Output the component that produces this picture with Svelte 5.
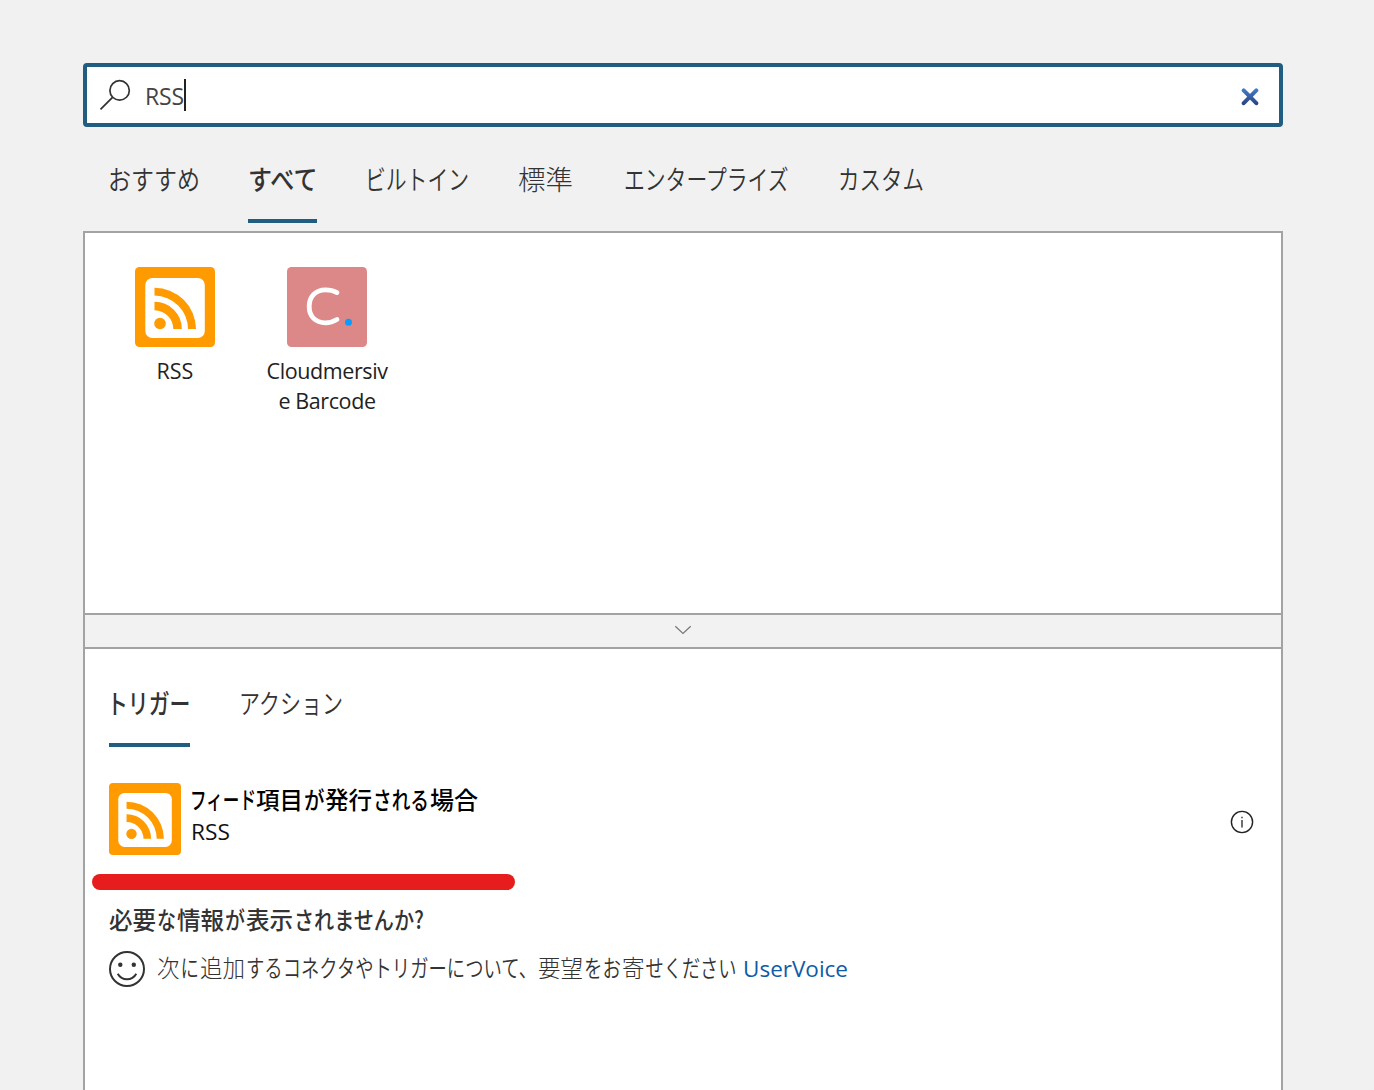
<script lang="ts">
  // A run is [text, left edge, width]; kana runs are set narrower than kanji.
  type Run = [string, number, number];
  type Line = { w: number; h: number; base: number; size: number; runs: Run[] };

  const tabs: { active?: boolean; line: Line }[] = [
    { line: { w: 91, h: 40, base: 30, size: 27, runs: [['おすすめ', 0, 92]] } },
    { active: true, line: { w: 69, h: 40, base: 30, size: 27, runs: [['すべて', 0, 69.5]] } },
    { line: { w: 103, h: 40, base: 30, size: 27, runs: [['ビルトイン', -1, 104]] } },
    { line: { w: 57, h: 40, base: 30, size: 27, runs: [['標準', 0, 55]] } },
    { line: { w: 164, h: 40, base: 30, size: 27, runs: [['エンタープライズ', 0, 164.5]] } },
    { line: { w: 86, h: 40, base: 30, size: 27, runs: [['カスタム', 1, 86]] } },
  ];
  const kinds: { active?: boolean; line: Line }[] = [
    { active: true, line: { w: 81, h: 40, base: 30, size: 27, runs: [['トリガー', -2, 83.5]] } },
    { line: { w: 104, h: 40, base: 30, size: 27, runs: [['アクション', 0, 104]] } },
  ];
  const title: Line = {
    w: 290, h: 32, base: 26, size: 24,
    runs: [['フィード', -1, 66], ['項目', 65, 47], ['が', 113, 20.5], ['発行', 134, 47], ['される', 182, 56], ['場合', 239, 48]],
  };
  const question: Line = {
    w: 320, h: 34, base: 25, size: 24,
    runs: [['必要', 0, 47], ['な', 48, 19], ['情報', 68, 47], ['が', 116, 20], ['表示', 137, 47], ['されませんか?', 185, 130]],
  };
  const hint: Line = {
    w: 586, h: 34, base: 25, size: 24,
    runs: [['次', 0, 22.5], ['に', 23.5, 18.5], ['追加', 43, 45], ['するコネクタやトリガーについて、', 89, 291], ['要望', 381, 45], ['をお', 427, 37], ['寄', 465, 22.5], ['せください', 488.5, 91]],
  };

  const isKanji = (text: string) => /^[\u4e00-\u9fff]+$/.test(text);

  let query = $state('RSS');
</script>

{#snippet textLine(line: Line)}
  <svg class="line" width={line.w} height={line.h} font-size={line.size}>
    <text y={line.base}>
      {#each line.runs as [text, x, width]}<tspan class:kanji={isKanji(text)} {x} textLength={width} lengthAdjust="spacingAndGlyphs">{text}</tspan>{/each}
    </text>
  </svg>
{/snippet}

{#snippet rssLogo(size: number)}
  <svg class="logo" width={size} height={size} viewBox="0 0 80 80">
    <rect width="80" height="80" rx="4.5" fill="#ff9a00" />
    <rect x="10.3" y="11" width="59.5" height="60" rx="7" fill="#fff" />
    <circle cx="25" cy="56.5" r="5.8" fill="#ff9a00" />
    <path d="M19.5 34.8A27 27 0 0 1 46.8 62H38.3A19 19 0 0 0 19.5 43.2ZM19.5 20.8A41.5 41.5 0 0 1 61 62H53A33.5 33.5 0 0 0 19.5 28.6Z" fill="#ff9a00" />
  </svg>
{/snippet}

<main>
  <div class="search">
    <svg width="32" height="32" viewBox="0 0 32 32" fill="none" stroke="#333" stroke-width="1.7">
      <circle cx="20.6" cy="11.4" r="9.7" />
      <path d="M13.5 18.3 1.5 30.3" />
    </svg>
    <span class="query">{query}</span><i class="caret"></i>
    <svg class="clear" width="18" height="18" viewBox="0 0 18 18">
      <defs>
        <linearGradient id="clear-fill" x1="0" y1="0" x2="0" y2="18" gradientUnits="userSpaceOnUse">
          <stop offset="0" stop-color="#4780cc" />
          <stop offset="1" stop-color="#253f78" />
        </linearGradient>
      </defs>
      <path d="M2.7 2.4 15.3 15.2M15.3 2.4 2.7 15.2" fill="none" stroke="url(#clear-fill)" stroke-width="4" stroke-linecap="round" />
    </svg>
  </div>

  <nav class="tabs">
    {#each tabs as tab}
      <div class="tab" class:active={tab.active}>{@render textLine(tab.line)}</div>
    {/each}
  </nav>

  <section class="panel">
    <div class="connectors">
      <div class="connector">
        {@render rssLogo(80)}
        <span>RSS</span>
      </div>
      <div class="connector">
        <svg class="logo" width="80" height="80" viewBox="0 0 80 80">
          <rect width="80" height="80" rx="4.5" fill="#dc8888" />
          <path d="M50 25.6C46.5 23.6 43 22.8 38.5 22.8C28 22.8 22.2 30 22.2 39.5C22.2 49.5 28.5 55.8 38.5 55.8C43 55.8 46.5 54.6 50 52.5" fill="none" stroke="#fff" stroke-width="4.8" stroke-linecap="round" />
          <circle cx="61.5" cy="55.3" r="3.5" fill="#0a9bff" />
        </svg>
        <span class="tight">Cloudmersiv<br />e Barcode</span>
      </div>
    </div>

    <div class="divider">
      <svg width="18" height="10" viewBox="0 0 18 10" fill="none" stroke="#777" stroke-width="1.2">
        <path d="M1.3 1.3 9 8.5 16.7 1.3" />
      </svg>
    </div>

    <div class="results">
      <nav class="kinds">
        {#each kinds as kind}
          <div class="tab" class:active={kind.active}>{@render textLine(kind.line)}</div>
        {/each}
      </nav>

      <div class="item">
        {@render rssLogo(72)}
        <div class="item-text">
          <div class="item-title">{@render textLine(title)}</div>
          <div class="item-sub">RSS</div>
        </div>
        <svg class="info" width="24" height="24" viewBox="0 0 24 24">
          <circle cx="12" cy="12" r="10.6" fill="none" stroke="#222" stroke-width="1.4" />
          <path d="M12 10V17.5M12 6.7V8.3" stroke="#222" stroke-width="1.3" />
        </svg>
      </div>

      <div class="marker"></div>

      <div class="question">{@render textLine(question)}</div>
      <div class="hint">
        <svg width="36" height="36" viewBox="0 0 36 36" fill="none" stroke="#333" stroke-width="2">
          <circle cx="18" cy="18" r="17" />
          <circle cx="11.3" cy="13.7" r="2.2" fill="#333" stroke="none" />
          <circle cx="24.8" cy="13.7" r="2.2" fill="#333" stroke="none" />
          <path d="M8.7 22.7C13 30.2 23 30.2 27.3 22.7" />
        </svg>
        {@render textLine(hint)}
        <a href="#uservoice">UserVoice</a>
      </div>
    </div>
  </section>
</main>

<style>
  :global(body) {
    margin: 0;
    background: #f1f1f1;
  }
  main {
    box-sizing: border-box;
    height: 1090px;
    padding: 63px 91px 0 83px;
    overflow: hidden;
    display: flex;
    flex-direction: column;
    color: #333;
    font-family: 'Open Sans', 'Noto Sans CJK JP', sans-serif;
  }
  svg {
    display: block;
    flex: none;
  }
  .line {
    overflow: visible;
    fill: currentColor;
    font-family: 'Noto Sans CJK JP', sans-serif;
    font-weight: 350;
  }
  .tab .kanji,
  .hint .kanji {
    font-weight: 300;
  }
  .search {
    box-sizing: border-box;
    height: 64px;
    flex: none;
    display: flex;
    align-items: center;
    padding: 0 20px 0 12px;
    background: #fff;
    border: 4px solid #215d80;
    border-radius: 4px;
  }
  .query {
    width: 39px;
    margin-left: 14px;
    color: #444;
    font-size: 23px;
    line-height: 32px;
    letter-spacing: -0.2px;
    padding-top: 2px;
  }
  .caret {
    width: 2px;
    height: 32px;
    background: #222;
  }
  .clear {
    margin-left: auto;
    margin-top: 3px;
  }
  .tabs {
    height: 104px;
    flex: none;
    display: flex;
    align-items: flex-start;
    gap: 49px;
    padding: 33px 0 0 25px;
    box-sizing: border-box;
  }
  .tab {
    height: 59px;
    border-bottom: 4px solid transparent;
  }
  .tab.active {
    border-color: #215d80;
  }
  .tab.active :global(.line) {
    font-weight: 500;
  }
  .panel {
    flex: 1;
    display: flex;
    flex-direction: column;
    background: #fff;
    border: 2px solid #a3a3a3;
    border-bottom: 0;
  }
  .connectors {
    height: 380px;
    box-sizing: border-box;
    padding: 34px 0 0 26px;
    display: flex;
    gap: 24px;
    flex: none;
  }
  .connector {
    width: 128px;
    display: flex;
    flex-direction: column;
    align-items: center;
    gap: 9px;
    color: #222;
    font-size: 21.5px;
    line-height: 30px;
    text-align: center;
    white-space: nowrap;
  }
  .tight {
    letter-spacing: -0.4px;
  }
  .divider {
    height: 32px;
    flex: none;
    display: flex;
    align-items: center;
    justify-content: center;
    background: #f2f2f2;
    border-top: 2px solid #a3a3a3;
    border-bottom: 2px solid #a3a3a3;
  }
  .divider svg {
    margin-bottom: 2px;
  }
  .results {
    padding: 35px 26px 0 24px;
    display: flex;
    flex-direction: column;
  }
  .kinds {
    display: flex;
    gap: 49px;
  }
  .item {
    display: flex;
    align-items: flex-start;
    margin-top: 36px;
    color: #000;
  }
  .item-text {
    margin-left: 10px;
  }
  .item-title :global(.line) {
    font-weight: 500;
  }
  .item-sub {
    color: #111;
    font-size: 22.7px;
    line-height: 32px;
    margin-top: 1px;
  }
  .info {
    margin: 27px 1px 0 auto;
  }
  .marker {
    width: 422.5px;
    height: 16px;
    margin: 19px 0 0 -17px;
    background: #e71c1c;
    border-radius: 8px;
  }
  .question {
    margin-top: 14px;
  }
  .question :global(.line) {
    font-weight: 500;
  }
  .hint {
    display: flex;
    align-items: center;
    margin-top: 13px;
  }
  .hint :global(.line) {
    margin-left: 12px;
  }
  .hint a {
    color: #0f5ba8;
    font-size: 22.5px;
    line-height: 32px;
    text-decoration: none;
  }
</style>
